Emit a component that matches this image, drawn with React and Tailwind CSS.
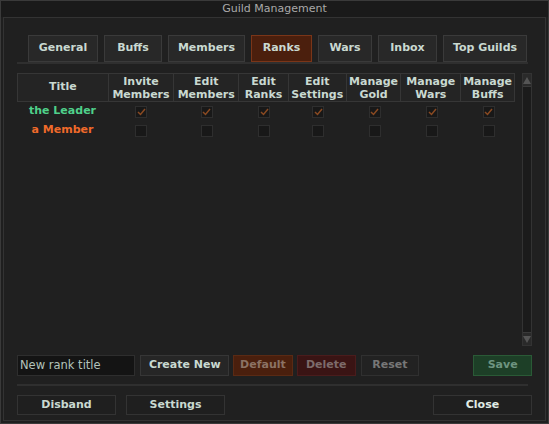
const TABS = [
  ['General', 'w-[70px]'],
  ['Buffs', 'w-[58px]'],
  ['Members', 'w-[77px]'],
  ['Ranks', 'w-[61px]'],
  ['Wars', 'w-[54px]'],
  ['Inbox', 'w-[59px]'],
  ['Top Guilds', 'w-[84px]'],
];

const COLS = [
  ['Invite', 'Members', 'w-[66px]'],
  ['Edit', 'Members', 'w-[65px]'],
  ['Edit', 'Ranks', 'w-[50px]'],
  ['Edit', 'Settings', 'w-[58px]'],
  ['Manage', 'Gold', 'w-[55px]'],
  ['Manage', 'Wars', 'w-[60px]'],
  ['Manage', 'Buffs', 'w-[53px]'],
];

const RANKS = [
  { name: 'the Leader', color: 'text-[#4fd08a]', checked: true },
  { name: 'a Member', color: 'text-[#f06a2a]', checked: false },
];

function Check({ on }) {
  return (
    <div className="h-[12px] w-[12px] border border-[#2e2e2e] bg-[#181818] flex items-center justify-center">
      {on && (
        <svg width="9" height="8" viewBox="0 0 9 8">
          <path d="M1 4 L3.5 6.5 L8 1" fill="none" stroke="#8a4a22" strokeWidth="1.5" />
        </svg>
      )}
    </div>
  );
}

function Btn({ children, className = '' }) {
  return (
    <div className={`flex items-center justify-center border ${className}`}>{children}</div>
  );
}

export default function App() {
  return (
    <div
      className="w-[549px] h-[424px] bg-[#1f1f1f] border border-[#3a3a3a] flex flex-col text-[11px] font-bold text-[#c9d9d1]"
      style={{ fontFamily: '"DejaVu Sans", Verdana, sans-serif' }}
    >
      <div className="h-[16px] bg-[#1a1a1a] flex items-center justify-center font-normal text-[#a9a9a9] shrink-0">
        Guild Management
      </div>
      <div className="flex-1 mx-[2px] mb-[2px] border border-[#333] bg-[#202020] px-[13px] flex flex-col">
        <div className="flex gap-[6px] pt-[17px] pl-[11px] border-b-2 border-[#2f2f2f] w-[511px]">
          {TABS.map(([t, w]) => (
            <Btn
              key={t}
              className={`${w} h-[27px] ${
                t === 'Ranks' ? 'bg-[#4b1f0d] border-[#7a3518]' : 'bg-[#282828] border-[#3a3a3a]'
              }`}
            >
              {t}
            </Btn>
          ))}
        </div>

        <div className="flex gap-[7px] mt-[9px]">
          <div className="w-[498px] h-[273px]">
            <div className="flex h-[29px] border border-[#363636] bg-[#242424]">
              <div className="w-[91px] border-r border-[#363636] flex items-center justify-center">Title</div>
              {COLS.map(([a, b, w], i) => (
                <div
                  key={i}
                  className={`${w} ${i < 6 ? 'border-r border-[#363636]' : ''} flex flex-col items-center justify-center leading-[13px]`}
                >
                  <span>{a}</span>
                  <span>{b}</span>
                </div>
              ))}
            </div>
            {RANKS.map((r) => (
              <div key={r.name} className="flex h-[19px] items-center">
                <div className={`w-[91px] text-center ${r.color}`}>{r.name}</div>
                {COLS.map(([, , w], i) => (
                  <div key={i} className={`${w} flex justify-center`}>
                    <Check on={r.checked} />
                  </div>
                ))}
              </div>
            ))}
          </div>
          <div className="w-[13px] h-[273px] border border-[#333] bg-[#1b1b1b] flex flex-col justify-between">
            <div className="h-[13px] bg-[#2a2a2a] border-b border-[#3a3a3a] flex items-center justify-center">
              <svg width="8" height="7" viewBox="0 0 8 7">
                <path d="M4 0 L8 7 L0 7 Z" fill="#555" />
              </svg>
            </div>
            <div className="h-[13px] bg-[#2a2a2a] border-t border-[#3a3a3a] flex items-center justify-center">
              <svg width="8" height="7" viewBox="0 0 8 7">
                <path d="M0 0 L8 0 L4 7 Z" fill="#555" />
              </svg>
            </div>
          </div>
        </div>

        <div className="flex items-center mt-[9px] h-[21px]">
          <div className="w-[119px] h-[21px] bg-[#141414] border border-[#2e2e2e] flex items-center px-[2px] font-normal text-[#b3c3bb] text-[11.5px]">
            New rank title
          </div>
          <Btn className="ml-[5px] w-[89px] h-[21px] bg-[#262626] border-[#363636]">Create New</Btn>
          <Btn className="ml-[4px] w-[60px] h-[21px] bg-[#4a1f0d] border-[#5a2a14] text-[#8c7264]">Default</Btn>
          <Btn className="ml-[4px] w-[59px] h-[21px] bg-[#3a1414] border-[#4a1c1c] text-[#7d6b6b]">Delete</Btn>
          <Btn className="ml-[5px] w-[59px] h-[21px] bg-[#222] border-[#303030] text-[#777]">Reset</Btn>
          <Btn className="ml-[54px] w-[59px] h-[21px] bg-[#1d3f27] border-[#2a5a36] text-[#6e9480]">Save</Btn>
        </div>

        <div className="mt-[8px] w-[511px] border-t-2 border-[#2f2f2f]" />

        <div className="flex items-center mt-[9px]">
          <Btn className="w-[99px] h-[20px] bg-[#1f1f1f] border-[#333]">Disband</Btn>
          <Btn className="ml-[10px] w-[99px] h-[20px] bg-[#1f1f1f] border-[#333]">Settings</Btn>
          <Btn className="ml-auto w-[99px] h-[20px] bg-[#1f1f1f] border-[#333] text-[#e0ece6]">Close</Btn>
        </div>
      </div>
    </div>
  );
}
